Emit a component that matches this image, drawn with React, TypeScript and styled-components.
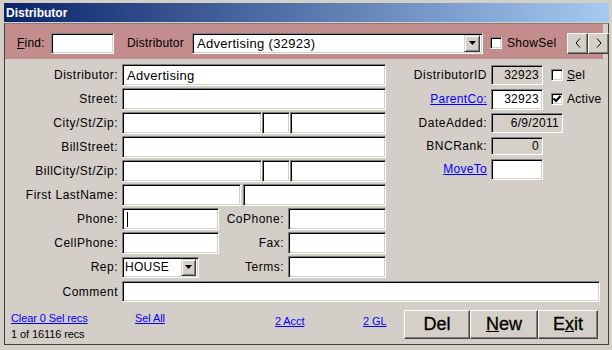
import React from "react";
import styled, { createGlobalStyle } from "styled-components";

const Global = createGlobalStyle`
  html, body { margin: 0; padding: 0; background: #d4d0c8; }
  body { font-family: "Liberation Sans", Arial, sans-serif; font-size: 12px; color: #000; }
  * { box-sizing: border-box; }
`;

const Window = styled.div`
  width: 612px;
  height: 350px;
  background: #d4d0c8;
  padding: 3px 3px 5px 4px;
  display: flex;
  flex-direction: column;
`;

const TitleBar = styled.div`
  height: 19px;
  flex: none;
  background: linear-gradient(to right, #0a246a, #a6caf0);
  color: #fff;
  font-weight: bold;
  font-size: 12px;
  display: flex;
  align-items: center;
  padding-left: 2px;
`;

const Client = styled.div`
  margin-top: 1px;
  flex: 1;
  display: flex;
  flex-direction: column;
  border-top: 1px solid #808080;
  border-left: 1px solid #404040;
  border-right: 1px solid #404040;
  border-bottom: 1px solid #404040;
  padding-right: 5px;
  background: #d4d0c8;
`;

const Header = styled.div`
  height: 35px;
  flex: none;
  background: #c28d8c;
  display: flex;
  align-items: center;
  padding: 3px 0 0 12px;
`;

const HLabel = styled.div<{ $w: number; $ml?: number }>`
  width: ${(p) => p.$w}px;
  margin-left: ${(p) => p.$ml ?? 0}px;
  flex: none;
  letter-spacing: 0.2px;
  white-space: nowrap;
`;

const Sunken = styled.div<{ $w: number; $h?: number; $ml?: number; $ro?: boolean; $right?: boolean; $fs?: number; $pl?: number }>`
  width: ${(p) => p.$w}px;
  height: ${(p) => p.$h ?? 22}px;
  margin-left: ${(p) => p.$ml ?? 0}px;
  flex: none;
  background: ${(p) => (p.$ro ? "#d4d0c8" : "#fff")};
  border-top: 1px solid #808080;
  border-left: 1px solid #808080;
  border-bottom: 1px solid #fff;
  border-right: 1px solid #fff;
  box-shadow: inset 1px 1px 0 #000, inset -1px -1px 0 #d4d0c8;
  display: flex;
  align-items: center;
  justify-content: ${(p) => (p.$right ? "flex-end" : "flex-start")};
  padding: ${(p) => (p.$right ? "0 3px 0 0" : `0 0 0 ${p.$pl ?? 4}px`)};
  font-size: ${(p) => p.$fs ?? 12}px;
  letter-spacing: 0.3px;
  white-space: nowrap;
  overflow: hidden;
`;

const ComboText = styled.div`
  flex: 1;
  overflow: hidden;
`;

const DropBtn = styled.div<{ $w: number; $h: number }>`
  width: ${(p) => p.$w}px;
  height: ${(p) => p.$h}px;
  flex: none;
  margin-right: 2px;
  background: #d4d0c8;
  border-top: 1px solid #d4d0c8;
  border-left: 1px solid #d4d0c8;
  border-right: 1px solid #404040;
  border-bottom: 1px solid #404040;
  box-shadow: inset 1px 1px 0 #fff, inset -1px -1px 0 #808080;
  display: flex;
  align-items: center;
  justify-content: center;
`;

const Check = styled.div<{ $ml?: number }>`
  width: 12px;
  height: 12px;
  flex: none;
  margin-left: ${(p) => p.$ml ?? 0}px;
  background: #fff;
  border-top: 1px solid #808080;
  border-left: 1px solid #808080;
  border-bottom: 1px solid #fff;
  border-right: 1px solid #fff;
  box-shadow: inset 1px 1px 0 #000, inset -1px -1px 0 #d4d0c8;
  display: flex;
  align-items: center;
  justify-content: center;
`;

const CheckLabel = styled.div<{ $ml?: number }>`
  margin-left: ${(p) => p.$ml ?? 4}px;
  letter-spacing: 0.3px;
  white-space: nowrap;
`;

const NavGroup = styled.div`
  display: flex;
`;

const RaisedBtn = styled.div<{ $w: number; $h: number; $fs?: number }>`
  width: ${(p) => p.$w}px;
  height: ${(p) => p.$h}px;
  flex: none;
  background: #d4d0c8;
  border-top: 1px solid #fff;
  border-left: 1px solid #fff;
  border-right: 1px solid #404040;
  border-bottom: 1px solid #404040;
  box-shadow: inset -1px -1px 0 #808080;
  display: flex;
  align-items: center;
  justify-content: center;
  font-size: ${(p) => p.$fs ?? 12}px;
  -webkit-text-stroke: ${(p) => (p.$fs && p.$fs > 14 ? "0.3px #000" : "0")};
`;

const Body = styled.div`
  flex: 1;
  background: #d3cec7;
  display: flex;
  flex-direction: column;
  padding-top: 5px;
`;

const TopSection = styled.div`
  display: flex;
  align-items: flex-start;
`;

const LeftCol = styled.div`
  width: 381px;
  display: flex;
  flex-direction: column;
  gap: 2px;
`;

const Row = styled.div<{ $h?: number; $mt?: number }>`
  height: ${(p) => p.$h ?? 22}px;
  margin-top: ${(p) => p.$mt ?? 0}px;
  display: flex;
  align-items: center;
`;

const Label = styled.div<{ $w: number }>`
  width: ${(p) => p.$w}px;
  flex: none;
  text-align: right;
  margin-right: 4px;
  letter-spacing: 0.5px;
  white-space: nowrap;
`;

const LinkText = styled.span<{ $fs?: number }>`
  color: #0000ff;
  text-decoration: underline;
  font-size: ${(p) => p.$fs ?? 12}px;
  letter-spacing: ${(p) => (p.$fs && p.$fs < 12 ? "-0.1px" : "0.3px")};
`;

const Spacer = styled.div<{ $w: number }>`
  width: ${(p) => p.$w}px;
  flex: none;
`;

const RightCol = styled.div`
  margin-left: 4px;
  padding-top: 1px;
  display: flex;
  flex-direction: column;
  gap: 4px;
`;

const Caret = styled.span`
  width: 1px;
  height: 15px;
  background: #000;
`;

const Footer = styled.div`
  flex: 1;
  display: flex;
  align-items: flex-start;
  padding-left: 6px;
`;

const LeftStack = styled.div`
  width: 264px;
  padding-top: 9px;
  display: flex;
  flex-direction: column;
  gap: 2px;
`;

const FootLine = styled.div`
  height: 14px;
  display: flex;
  align-items: center;
  font-size: 11px;
  letter-spacing: -0.1px;
  white-space: nowrap;
`;

const FootCell = styled.div<{ $w: number }>`
  width: ${(p) => p.$w}px;
  flex: none;
  height: 14px;
  display: flex;
  align-items: center;
  white-space: nowrap;
`;

const LinkCell = styled.div<{ $w: number }>`
  width: ${(p) => p.$w}px;
  flex: none;
  margin-top: 12px;
  height: 14px;
  display: flex;
  align-items: center;
  white-space: nowrap;
`;

const BtnGroup = styled.div`
  display: flex;
  margin-top: 8px;
`;

const U = styled.span`
  text-decoration: underline;
`;

const Arrow = () => (
  <svg width="7" height="4" viewBox="0 0 7 4">
    <polygon points="0,0 7,0 3.5,4" fill="#000" />
  </svg>
);

const Chevron = ({ dir }: { dir: "l" | "r" }) => (
  <svg width="6" height="10" viewBox="0 0 6 10">
    <polyline
      points={dir === "l" ? "5,0.5 1,5 5,9.5" : "1,0.5 5,5 1,9.5"}
      fill="none"
      stroke="#000"
      strokeWidth="1"
    />
  </svg>
);

const Tick = () => (
  <svg width="8" height="8" viewBox="0 0 8 8">
    <polyline points="0.5,3.5 3,6 7.5,1" fill="none" stroke="#000" strokeWidth="2" />
  </svg>
);

export default function App() {
  return (
    <>
      <Global />
      <Window>
        <TitleBar>Distributor</TitleBar>
        <Client>
          <Header>
            <HLabel $w={34}>
              <U>F</U>ind:
            </HLabel>
            <Sunken $w={63} $h={21} />
            <HLabel $w={65} $ml={13}>
              Distributor
            </HLabel>
            <Sunken $w={291} $h={21} $fs={13} $pl={4}>
              <ComboText>Advertising (32923)</ComboText>
              <DropBtn $w={16} $h={17}>
                <Arrow />
              </DropBtn>
            </Sunken>
            <Check $ml={7} />
            <CheckLabel $ml={5}>ShowSel</CheckLabel>
            <Spacer $w={11} />
            <NavGroup>
              <RaisedBtn $w={21} $h={21}>
                <Chevron dir="l" />
              </RaisedBtn>
              <RaisedBtn $w={21} $h={21}>
                <Chevron dir="r" />
              </RaisedBtn>
            </NavGroup>
          </Header>
          <Body>
            <TopSection>
              <LeftCol>
                <Row>
                  <Label $w={113}>Distributor:</Label>
                  <Sunken $w={264} $fs={13}>Advertising</Sunken>
                </Row>
                <Row>
                  <Label $w={113}>Street:</Label>
                  <Sunken $w={264} />
                </Row>
                <Row>
                  <Label $w={113}>City/St/Zip:</Label>
                  <Sunken $w={140} />
                  <Sunken $w={28} />
                  <Sunken $w={96} />
                </Row>
                <Row>
                  <Label $w={113}>BillStreet:</Label>
                  <Sunken $w={264} />
                </Row>
                <Row>
                  <Label $w={113}>BillCity/St/Zip:</Label>
                  <Sunken $w={140} />
                  <Sunken $w={28} />
                  <Sunken $w={96} />
                </Row>
                <Row>
                  <Label $w={113}>First LastName:</Label>
                  <Sunken $w={119} />
                  <Sunken $w={143} $ml={2} />
                </Row>
                <Row>
                  <Label $w={113}>Phone:</Label>
                  <Sunken $w={97}>
                    <Caret />
                  </Sunken>
                  <Label $w={65}>CoPhone:</Label>
                  <Sunken $w={98} />
                </Row>
                <Row>
                  <Label $w={113}>CellPhone:</Label>
                  <Sunken $w={97} />
                  <Label $w={65}>Fax:</Label>
                  <Sunken $w={98} />
                </Row>
                <Row>
                  <Label $w={113}>Rep:</Label>
                  <Sunken $w={77} $h={21} $pl={2}>
                    <ComboText>HOUSE</ComboText>
                    <DropBtn $w={15} $h={17}>
                      <Arrow />
                    </DropBtn>
                  </Sunken>
                  <Label $w={85}>Terms:</Label>
                  <Sunken $w={98} />
                </Row>
              </LeftCol>
              <RightCol>
                <Row $h={20}>
                  <Label $w={97}>DistributorID</Label>
                  <Sunken $w={52} $h={20} $ro $right>
                    32923
                  </Sunken>
                  <Check $ml={8} />
                  <CheckLabel>
                    <U>S</U>el
                  </CheckLabel>
                </Row>
                <Row $h={20}>
                  <Label $w={97}>
                    <LinkText>ParentCo:</LinkText>
                  </Label>
                  <Sunken $w={52} $h={21} $right>
                    32923
                  </Sunken>
                  <Check $ml={8}>
                    <Tick />
                  </Check>
                  <CheckLabel>Active</CheckLabel>
                </Row>
                <Row $h={20}>
                  <Label $w={97}>DateAdded:</Label>
                  <Sunken $w={72} $h={20} $ro $right>
                    6/9/2011
                  </Sunken>
                </Row>
                <Row $h={18}>
                  <Label $w={97}>BNCRank:</Label>
                  <Sunken $w={52} $h={18} $ro $right>
                    0
                  </Sunken>
                </Row>
                <Row $h={20}>
                  <Label $w={97}>
                    <LinkText>MoveTo</LinkText>
                  </Label>
                  <Sunken $w={52} $h={21} />
                </Row>
              </RightCol>
            </TopSection>
            <Row $h={21} $mt={3}>
              <Label $w={113}>Comment</Label>
              <Sunken $w={478} $h={21} />
            </Row>
            <Footer>
              <LeftStack>
                <FootLine>
                  <FootCell $w={124}>
                    <LinkText $fs={11}>Clear 0 Sel recs</LinkText>
                  </FootCell>
                  <FootCell $w={80}>
                    <LinkText $fs={11}>Sel All</LinkText>
                  </FootCell>
                </FootLine>
                <FootLine>1 of 16116 recs</FootLine>
              </LeftStack>
              <LinkCell $w={88}>
                <LinkText $fs={11}>2 Acct</LinkText>
              </LinkCell>
              <LinkCell $w={41}>
                <LinkText $fs={11}>2 GL</LinkText>
              </LinkCell>
              <BtnGroup>
                <RaisedBtn $w={66} $h={29} $fs={18}>
                  Del
                </RaisedBtn>
                <RaisedBtn $w={68} $h={29} $fs={18}>
                  <span>
                    <U>N</U>ew
                  </span>
                </RaisedBtn>
                <RaisedBtn $w={60} $h={29} $fs={18}>
                  <span>
                    E<U>x</U>it
                  </span>
                </RaisedBtn>
              </BtnGroup>
            </Footer>
          </Body>
        </Client>
      </Window>
    </>
  );
}
